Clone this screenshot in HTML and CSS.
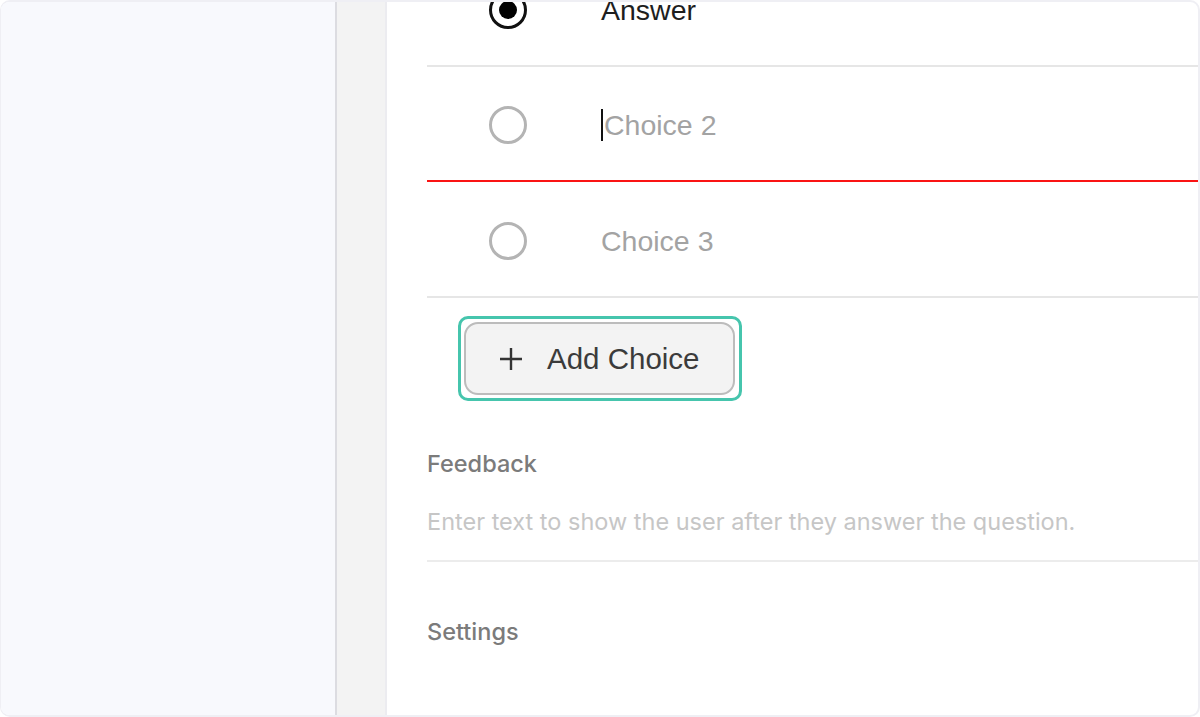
FILE: index.html
```html
<!DOCTYPE html>
<html>
<head>
<meta charset="utf-8">
<link rel="stylesheet" href="styles.css">
</head>
<body>
<div class="frame">
  <aside class="sidebar"></aside>
  <div class="gutter"></div>
  <main class="main">
    <div class="choices">
      <div class="choice">
        <span class="radio radio-on"></span>
        <span class="choice-text answer">Answer</span>
      </div>
      <div class="choice choice-error">
        <span class="radio"></span>
        <span class="choice-text placeholder"><span class="caret"></span>Choice 2</span>
      </div>
      <div class="choice">
        <span class="radio"></span>
        <span class="choice-text placeholder">Choice 3</span>
      </div>
    </div>
    <div class="add-wrap">
      <div class="focus-ring">
        <button class="add-btn">
          <svg class="plus" width="24" height="24" viewBox="0 0 24 24"><path d="M12 1v22M1 12h22" stroke="#333" stroke-width="2.4" fill="none"/></svg>
          <span>Add Choice</span>
        </button>
      </div>
    </div>
    <section class="feedback">
      <div class="label">Feedback</div>
      <div class="hint">Enter text to show the user after they answer the question.</div>
    </section>
    <section class="settings">
      <div class="label">Settings</div>
    </section>
  </main>
</div>
</body>
</html>
```

FILE: styles.css
```css
html, body {
  margin: 0;
  padding: 0;
  background: #ffffff;
}
.frame {
  box-sizing: border-box;
  width: 1200px;
  height: 717px;
  display: flex;
  border: 2px solid #efeff4;
  border-left-width: 1px;
  border-radius: 10px;
  overflow: hidden;
  background: #ffffff;
}
.sidebar {
  width: 334px;
  flex: none;
  background: #f8f9fd;
  border-right: 2px solid #dcdce1;
}
.gutter {
  width: 48px;
  flex: none;
  background: #f3f3f3;
  border-right: 2px solid #ececf0;
}
.main {
  flex: 1;
  padding-left: 40px;
  overflow: hidden;
  font-family: "Liberation Sans", Arial, sans-serif;
}
.choices {
  margin-top: -50px;
}
.choice {
  height: 110px;
  padding-top: 3px;
  display: flex;
  align-items: center;
  border-bottom: 2px solid #e6e6e6;
}
.choice:last-child {
  padding-top: 4px;
}
.choice-error {
  border-bottom-color: #fa1414;
}
.radio {
  box-sizing: border-box;
  width: 38px;
  height: 38px;
  margin-left: 62px;
  border-radius: 50%;
  border: 3px solid #b4b4b4;
  flex: none;
  display: flex;
  align-items: center;
  justify-content: center;
}
.radio-on {
  border-color: #111111;
}
.radio-on::after {
  content: "";
  width: 18px;
  height: 18px;
  border-radius: 50%;
  background: #000;
}
.choice-text {
  margin-left: 74px;
  font-size: 28.5px;
  display: flex;
  align-items: center;
}
.answer {
  color: #1e1e1e;
}
.placeholder {
  color: #a3a3a3;
}
.caret {
  width: 2px;
  height: 32px;
  background: #111;
  margin-right: 1px;
}
.add-wrap {
  padding: 18px 0 0 31px;
}
.focus-ring {
  display: inline-block;
  border: 3px solid #46c5ad;
  border-radius: 10px;
  padding: 3px 4px 3px 3px;
}
.add-btn {
  box-sizing: border-box;
  width: 271px;
  height: 73px;
  display: flex;
  align-items: center;
  gap: 24px;
  padding: 0 0 0 33px;
  border: 2px solid #bcbcbc;
  border-radius: 14px;
  background: #f3f3f3;
  font-family: "Liberation Sans", Arial, sans-serif;
  font-size: 29.5px;
  color: #3b3b3b;
}
.plus {
  flex: none;
}
.feedback {
  padding-top: 48px;
  border-bottom: 2px solid #ececec;
  padding-bottom: 23px;
  font-family: Inter, "Liberation Sans", sans-serif;
}
.label {
  font-family: Inter, "Liberation Sans", sans-serif;
  font-size: 23.5px;
  font-weight: 500;
  color: #7b7b7b;
  line-height: 30px;
}
.hint {
  margin-top: 28px;
  font-size: 23.5px;
  color: #c6c6c6;
  line-height: 30px;
}
.settings {
  padding-top: 55px;
}
```
